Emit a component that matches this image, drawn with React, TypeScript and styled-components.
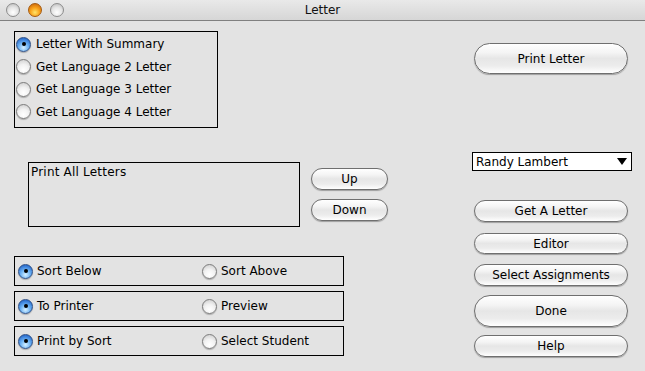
import React from "react";
import styled, { createGlobalStyle } from "styled-components";

const Global = createGlobalStyle`
  html, body { margin: 0; padding: 0; }
  body { font-family: "DejaVu Sans", "Liberation Sans", sans-serif; }
`;

const Window = styled.div`
  width: 645px;
  height: 371px;
  background: #e3e3e3;
  overflow: hidden;
  display: flex;
  flex-direction: column;
`;

const TitleBar = styled.div`
  height: 20px;
  border-bottom: 1px solid #808080;
  background: linear-gradient(#e9e9e9, #d6d6d6);
  display: flex;
  align-items: center;
  position: relative;
`;

const Lights = styled.div`
  display: flex;
  gap: 8px;
  padding-left: 6px;
`;

const Light = styled.span<{ $color: "gray" | "orange" }>`
  width: 14px;
  height: 14px;
  border-radius: 50%;
  box-sizing: border-box;
  border: 1px solid ${(p) => (p.$color === "orange" ? "#a55a10" : "#8c8c8c")};
  background: ${(p) =>
    p.$color === "orange"
      ? "radial-gradient(circle at 50% 70%, #ffe46a 0%, #f9a21a 45%, #c05a08 100%)"
      : "radial-gradient(circle at 50% 70%, #ffffff 0%, #e4e4e4 50%, #b4b4b4 100%)"};
`;

const Title = styled.div`
  position: absolute;
  left: 0;
  right: 0;
  text-align: center;
  font-size: 12px;
  color: #111;
  pointer-events: none;
`;

const Content = styled.div`
  display: flex;
  padding-left: 14px;
`;

const LeftCol = styled.div`
  width: 374px;
  display: flex;
  flex-direction: column;
`;

const RightCol = styled.div`
  width: 160px;
  margin-left: 84px;
  display: flex;
  flex-direction: column;
`;

const RadioBox = styled.div`
  margin-top: 10px;
  width: 204px;
  height: 97px;
  box-sizing: border-box;
  border: 1px solid #000;
  padding: 1px 1px;
  display: flex;
  flex-direction: column;
`;

const RadioRow = styled.label`
  height: 22.5px;
  flex: none;
  display: flex;
  align-items: center;
  gap: 5px;
  font-size: 12px;
  color: #000;
  white-space: nowrap;
`;

const Radio = styled.span<{ $on?: boolean }>`
  width: 15px;
  height: 15px;
  flex: none;
  box-sizing: border-box;
  border-radius: 50%;
  border: 1px solid ${(p) => (p.$on ? "#2d4f86" : "#7c7c7c")};
  background: ${(p) =>
    p.$on
      ? "radial-gradient(circle at 50% 75%, #d6f0ff 0%, #6fb4f4 40%, #2a6fd0 80%, #1f4e9a 100%)"
      : "radial-gradient(circle at 50% 75%, #ffffff 0%, #f2f2f2 45%, #c8c8c8 100%)"};
  box-shadow: 0 1px 1px rgba(0, 0, 0, 0.25);
  display: flex;
  align-items: center;
  justify-content: center;
  &::after {
    content: "";
    display: ${(p) => (p.$on ? "block" : "none")};
    width: 4px;
    height: 4px;
    border-radius: 50%;
    background: #000;
  }
`;

const ListRow = styled.div`
  margin-top: 34px;
  display: flex;
`;

const ListBox = styled.div`
  margin-left: 14px;
  width: 275px;
  height: 65px;
  box-sizing: border-box;
  border: 1px solid #000;
  padding: 2px 2px;
  font-size: 12px;
  letter-spacing: 0.2px;
  color: #000;
`;

const SmallButtons = styled.div`
  margin-left: 9px;
  display: flex;
  flex-direction: column;
`;

const Button = styled.button<{ $h: number; $mt: number; $w?: number }>`
  margin: ${(p) => p.$mt}px 0 0 2px;
  width: ${(p) => p.$w ?? 154}px;
  height: ${(p) => p.$h}px;
  box-sizing: border-box;
  border: 1px solid #6f6f6f;
  border-radius: ${(p) => p.$h / 2}px;
  background: linear-gradient(
    #ffffff 0%,
    #f4f4f4 30%,
    #e6e6e6 50%,
    #ececec 75%,
    #ffffff 100%
  );
  box-shadow: 0 1px 1px rgba(0, 0, 0, 0.3);
  font-family: "DejaVu Sans", "Liberation Sans", sans-serif;
  font-size: 12px;
  color: #000;
  padding: 0;
  display: flex;
  align-items: center;
  justify-content: center;
`;

const OptionBoxes = styled.div`
  margin-top: 29px;
  display: flex;
  flex-direction: column;
  gap: 5px;
`;

const OptionBox = styled.div`
  width: 330px;
  height: 30px;
  box-sizing: border-box;
  border: 1px solid #000;
  padding-left: 3px;
  display: grid;
  grid-template-columns: 184px 1fr;
  align-items: center;
`;

const OptionItem = styled.label`
  display: flex;
  align-items: center;
  gap: 4px;
  font-size: 12px;
  color: #000;
  white-space: nowrap;
`;

const Dropdown = styled.div`
  margin-top: 78px;
  width: 160px;
  height: 19px;
  box-sizing: border-box;
  border: 1px solid #000;
  background: #fff;
  display: flex;
  align-items: center;
  justify-content: space-between;
  padding: 0 4px 0 3px;
  font-size: 12px;
  color: #000;
`;

const Arrow = styled.span`
  width: 0;
  height: 0;
  border-left: 5px solid transparent;
  border-right: 5px solid transparent;
  border-top: 7px solid #000;
`;

const topOptions = [
  "Letter With Summary",
  "Get Language 2 Letter",
  "Get Language 3 Letter",
  "Get Language 4 Letter",
];

const pairs: [string, string][] = [
  ["Sort Below", "Sort Above"],
  ["To Printer", "Preview"],
  ["Print by Sort", "Select Student"],
];

export default function App() {
  return (
    <>
      <Global />
      <Window>
        <TitleBar>
          <Lights>
            <Light $color="gray" />
            <Light $color="orange" />
            <Light $color="gray" />
          </Lights>
          <Title>Letter</Title>
        </TitleBar>
        <Content>
          <LeftCol>
            <RadioBox>
              {topOptions.map((t, i) => (
                <RadioRow key={t}>
                  <Radio $on={i === 0} />
                  {t}
                </RadioRow>
              ))}
            </RadioBox>
            <ListRow>
              <ListBox>Print All Letters</ListBox>
              <SmallButtons>
                <Button $h={22} $mt={6} $w={77}>Up</Button>
                <Button $h={22} $mt={9} $w={77}>Down</Button>
              </SmallButtons>
            </ListRow>
            <OptionBoxes>
              {pairs.map(([a, b]) => (
                <OptionBox key={a}>
                  <OptionItem>
                    <Radio $on />
                    {a}
                  </OptionItem>
                  <OptionItem>
                    <Radio />
                    {b}
                  </OptionItem>
                </OptionBox>
              ))}
            </OptionBoxes>
          </LeftCol>
          <RightCol>
            <Button $h={31} $mt={22}>Print Letter</Button>
            <Dropdown>
              Randy Lambert
              <Arrow />
            </Dropdown>
            <Button $h={22} $mt={29}>Get A Letter</Button>
            <Button $h={21} $mt={11}>Editor</Button>
            <Button $h={22} $mt={10}>Select Assignments</Button>
            <Button $h={32} $mt={9}>Done</Button>
            <Button $h={22} $mt={8}>Help</Button>
          </RightCol>
        </Content>
      </Window>
    </>
  );
}
